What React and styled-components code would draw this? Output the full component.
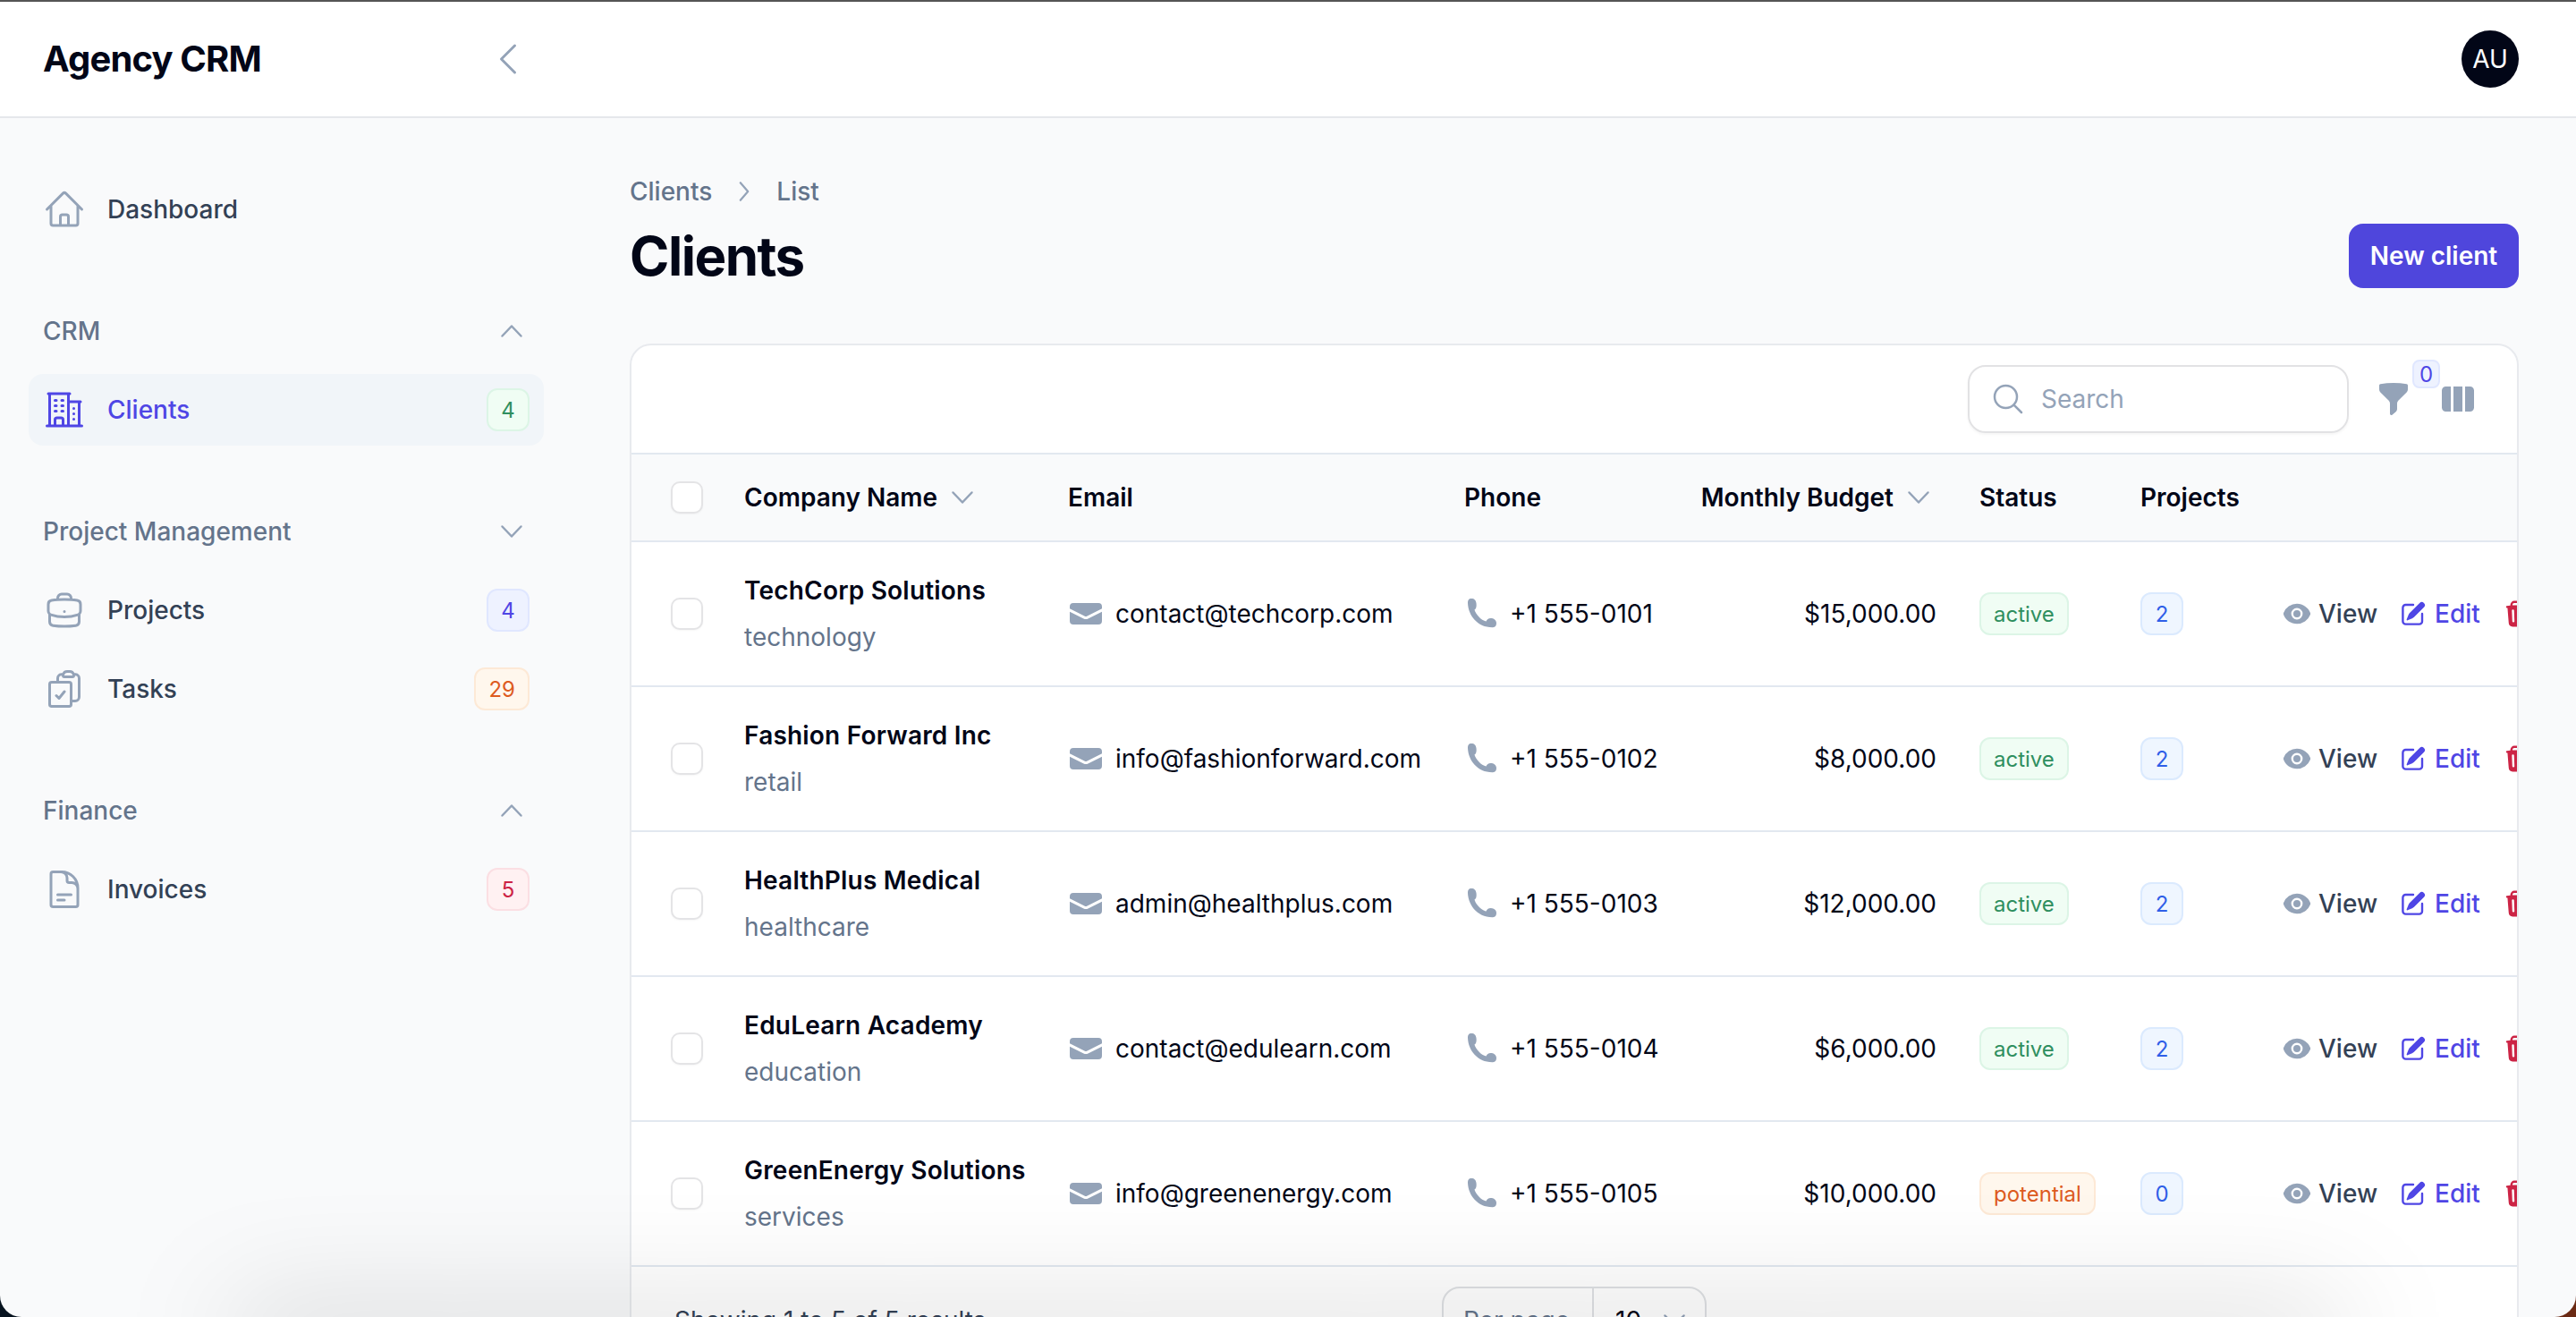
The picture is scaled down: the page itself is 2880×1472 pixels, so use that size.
import React from "react";
import styled, { createGlobalStyle, css } from "styled-components";

const GlobalStyle = createGlobalStyle`
  * { box-sizing: border-box; }
  html, body { margin: 0; padding: 0; }
  body {
    background: linear-gradient(90deg, #07131f 50%, #6b2a14 50%);
    font-family: Inter, "Noto Sans", sans-serif;
    color: #020617;
  }
`;

const tones = {
  gray: { fg: "#334155" },
  primary: { fg: "#4f46e5", bg: "#eef2ff", line: "#e0e7ff" },
  green: { fg: "#2f8f5f", bg: "#f0fdf4", line: "#dcf5e6" },
  orange: { fg: "#dd5b1f", bg: "#fff7ed", line: "#fde9d6" },
  red: { fg: "#cc2445", bg: "#fff1f2", line: "#fbdfe3" },
  blue: { fg: "#2f5fe8", bg: "#eff6ff", line: "#dbeafe" },
};

const Page = styled.div`
  position: relative;
  width: 2880px;
  height: 1472px;
  overflow: hidden;
  display: flex;
  flex-direction: column;
  background: #f9fafb;
  border-bottom-left-radius: 24px;
  border-bottom-right-radius: 24px;
`;

/* shadow of the window underneath, comes up from the bottom edge */
const WindowShade = styled.div`
  position: absolute;
  left: 260px;
  right: 260px;
  top: 1472px;
  height: 40px;
  box-shadow: 0 0 130px rgba(0, 0, 0, 0.26);
  pointer-events: none;
`;

const TopBar = styled.header`
  flex: none;
  height: 132px;
  display: flex;
  align-items: center;
  justify-content: space-between;
  background: #fff;
  border-top: 2px solid #555;
  border-bottom: 2px solid #e5e7eb;
  padding-right: 64px;
`;

const BrandArea = styled.div`
  width: 640px;
  display: flex;
  align-items: center;
  justify-content: space-between;
  padding: 0 48px;
`;

const Brand = styled.div`
  font-size: 40px;
  line-height: 56px;
  font-weight: 700;
  letter-spacing: -0.85px;
  color: #020617;
`;

const Avatar = styled.div`
  width: 64px;
  height: 64px;
  border-radius: 50%;
  background: #020617;
  color: #fff;
  font-size: 28px;
  font-weight: 400;
  display: flex;
  align-items: center;
  justify-content: center;
`;

const Shell = styled.div`
  flex: 1;
  min-height: 0;
  display: flex;
`;

const Sidebar = styled.nav`
  flex: none;
  width: 640px;
  padding: 62px 32px 0;
  display: flex;
  flex-direction: column;
  gap: 56px;
`;

const NavGroup = styled.div`
  display: flex;
  flex-direction: column;
  gap: 8px;
`;

const NavLabel = styled.div`
  height: 80px;
  padding: 0 16px;
  display: flex;
  align-items: center;
  justify-content: space-between;
  font-size: 28px;
  font-weight: 500;
  color: #64748b;
`;

const NavItem = styled.a`
  height: 80px;
  padding: 0 16px;
  display: flex;
  align-items: center;
  gap: 24px;
  border-radius: 16px;
  font-size: 28px;
  font-weight: 500;
  color: ${(p) => (p.$active ? "#4f46e5" : "#334155")};
  background: ${(p) => (p.$active ? "#f1f5f9" : "transparent")};
  span:first-of-type { flex: 1; }
`;

const Pill = styled.span`
  display: inline-flex;
  align-items: center;
  justify-content: center;
  flex: none;
  min-width: 48px;
  height: 48px;
  padding: 0 14px;
  border-radius: 12px;
  font-size: 24px;
  font-weight: 400;
  color: ${(p) => tones[p.$tone].fg};
  background: ${(p) => tones[p.$tone].bg};
  border: 2px solid ${(p) => tones[p.$tone].line};
`;

const Main = styled.main`
  flex: 1;
  min-width: 0;
  padding: 62px 64px 0;
`;

const Crumbs = styled.div`
  display: flex;
  align-items: center;
  height: 40px;
  gap: 18px;
  font-size: 28px;
  font-weight: 500;
  color: #64748b;
`;

const TitleRow = styled.div`
  margin-top: 16px;
  display: flex;
  align-items: center;
  justify-content: space-between;
`;

const Title = styled.h1`
  margin: 0;
  font-size: 60px;
  line-height: 72px;
  font-weight: 700;
  letter-spacing: -1.5px;
  color: #020617;
`;

const NewButton = styled.button`
  height: 72px;
  width: 190px;
  border: 0;
  border-radius: 16px;
  background: #4f46dc;
  color: #fff;
  font-family: inherit;
  font-size: 28px;
  font-weight: 600;
`;

const Card = styled.section`
  margin-top: 62px;
  background: #fff;
  border: 2px solid #e8eaee;
  border-radius: 24px;
  overflow: hidden;
`;

const Toolbar = styled.div`
  height: 120px;
  padding-right: 46px;
  display: flex;
  align-items: center;
  justify-content: flex-end;
  gap: 30px;
`;

const SearchBox = styled.label`
  width: 426px;
  height: 76px;
  padding: 0 23px;
  display: flex;
  align-items: center;
  gap: 17px;
  border: 2px solid #e2e2e4;
  border-radius: 20px;
  box-shadow: 0 2px 3px rgba(0, 0, 0, 0.04);
`;

const SearchInput = styled.input`
  flex: 1;
  min-width: 0;
  border: 0;
  outline: 0;
  padding: 0;
  background: transparent;
  font-family: inherit;
  font-size: 28px;
  color: #020617;
  &::placeholder { color: #94a3b8; }
`;

const ToolIcons = styled.div`
  display: flex;
  gap: 32px;
`;

const FilterWrap = styled.div`
  position: relative;
  width: 40px;
  height: 40px;
`;

const CountBadge = styled.span`
  position: absolute;
  top: -24px;
  left: 41px;
  width: 31px;
  height: 32px;
  display: flex;
  align-items: center;
  justify-content: center;
  border-radius: 8px;
  border: 2px solid #e0e7ff;
  background: #eef2ff;
  color: #4f46e5;
  font-size: 24px;
  font-weight: 400;
`;

const columns = css`
  display: grid;
  grid-template-columns: 126px 362px 443px 243px 285px 228px 159px 1fr;
  align-items: center;
`;

const HeadRow = styled.div`
  ${columns}
  height: 100px;
  background: #f9fafb;
  border-top: 2px solid #e2e8f0;
  border-bottom: 2px solid #e2e8f0;
  font-size: 28px;
  font-weight: 600;
  color: #020617;
`;

const Row = styled.div`
  ${columns}
  height: 162px;
  border-bottom: 2px solid #e2e8f0;
  font-size: 28px;
  color: #020617;
`;

const CheckCell = styled.div`
  padding-left: 44px;
`;

const Check = styled.span`
  display: block;
  width: 36px;
  height: 36px;
  border-radius: 10px;
  border: 2px solid #e4e4e6;
  background: #fff;
  box-shadow: 0 1px 2px rgba(0, 0, 0, 0.04);
`;

const SortLabel = styled.div`
  display: flex;
  align-items: center;
  gap: 8px;
  justify-content: ${(p) => (p.$end ? "flex-end" : "flex-start")};
`;

const Company = styled.div`
  display: flex;
  flex-direction: column;
  gap: 12px;
  line-height: 40px;
`;

const CompanyName = styled.div`
  font-weight: 600;
  letter-spacing: 0.2px;
`;

const CompanyType = styled.div`
  color: #64748b;
`;

const Contact = styled.div`
  display: flex;
  align-items: center;
  gap: ${(p) => p.$gap}px;
`;

const Budget = styled.div`
  text-align: right;
`;

const StatusCell = styled.div`
  padding-left: 48px;
`;

const Actions = styled.div`
  display: flex;
  align-items: center;
  gap: 24px;
`;

const Action = styled.a`
  display: flex;
  align-items: center;
  flex: none;
  gap: 8px;
  font-weight: 500;
  color: ${(p) => tones[p.$tone].fg};
`;

const Footer = styled.div`
  height: 200px;
  padding: 22px 48px;
  display: grid;
  grid-template-columns: 1fr auto 1fr;
  align-items: start;
  font-size: 28px;
`;

const ShowText = styled.div`
  line-height: 76px;
  color: #334155;
`;

const PerPage = styled.div`
  width: 296px;
  height: 76px;
  display: flex;
  align-items: center;
  background: #fff;
  border: 2px solid #dfe1e4;
  border-radius: 20px;
`;

const PerLabel = styled.div`
  width: 168px;
  height: 100%;
  padding-left: 22px;
  display: flex;
  align-items: center;
  color: #64748b;
  border-right: 2px solid #dfe1e4;
`;

const PerValue = styled.div`
  flex: 1;
  padding: 0 14px 0 24px;
  display: flex;
  align-items: center;
  justify-content: space-between;
`;

const Glyph = styled.svg`
  flex: none;
  display: block;
  width: ${(p) => p.$size || 48}px;
  height: ${(p) => p.$size || 48}px;
  color: ${(p) => p.$color || "#94a3b8"};
`;

function Outline({ d, size, color, width = 1.5 }) {
  return (
    <Glyph $size={size} $color={color} viewBox="0 0 24 24" fill="none" stroke="currentColor" strokeWidth={width} strokeLinecap="round" strokeLinejoin="round">
      <path d={d} />
    </Glyph>
  );
}

function Solid({ paths, size = 40, color }) {
  return (
    <Glyph $size={size} $color={color} viewBox="0 0 20 20" fill="currentColor">
      {paths.map((d) => (
        <path key={d} d={d} fillRule="evenodd" clipRule="evenodd" />
      ))}
    </Glyph>
  );
}

const icons = {
  home: "M2.25 12l8.954-8.955c.44-.439 1.152-.439 1.591 0L21.75 12M4.5 9.75v10.125c0 .621.504 1.125 1.125 1.125H9.75v-4.875c0-.621.504-1.125 1.125-1.125h2.25c.621 0 1.125.504 1.125 1.125V21h4.125c.621 0 1.125-.504 1.125-1.125V9.75M8.25 21h8.25",
  building: "M2.25 21h19.5m-18-18v18m10.5-18v18m6-13.5V21M6.75 6.75h.75m-.75 3h.75m-.75 3h.75m3-6h.75m-.75 3h.75m-.75 3h.75M6.75 21v-3.375c0-.621.504-1.125 1.125-1.125h2.25c.621 0 1.125.504 1.125 1.125V21M3 3h12m-.75 4.5H21m-3.75 3.75h.008v.008h-.008v-.008zm0 3h.008v.008h-.008v-.008zm0 3h.008v.008h-.008v-.008z",
  briefcase: "M20.25 14.15v4.25c0 1.094-.787 2.036-1.872 2.18-2.087.277-4.216.42-6.378.42s-4.291-.143-6.378-.42c-1.085-.144-1.872-1.086-1.872-2.18v-4.25m16.5 0a2.18 2.18 0 00.75-1.661V8.706c0-1.081-.768-2.015-1.837-2.175a48.114 48.114 0 00-3.413-.387m4.5 8.006c-.194.165-.42.295-.673.38A23.978 23.978 0 0112 15.75c-2.648 0-5.195-.429-7.577-1.22a2.016 2.016 0 01-.673-.38m0 0A2.18 2.18 0 013 12.489V8.706c0-1.081.768-2.015 1.837-2.175a48.111 48.111 0 013.413-.387m7.5 0V5.25A2.25 2.25 0 0013.5 3h-3a2.25 2.25 0 00-2.25 2.25v.894m7.5 0a48.667 48.667 0 00-7.5 0M12 12.75h.008v.008H12v-.008z",
  clipboard: "M11.35 3.836c-.065.21-.1.433-.1.664 0 .414.336.75.75.75h4.5a.75.75 0 00.75-.75 2.25 2.25 0 00-.1-.664m-5.8 0A2.251 2.251 0 0113.5 2.25H15c1.012 0 1.867.668 2.15 1.586m-5.8 0c-.376.023-.75.05-1.124.08C9.095 4.01 8.25 4.973 8.25 6.108V8.25m8.9-4.414c.376.023.75.05 1.124.08 1.131.094 1.976 1.057 1.976 2.192V16.5A2.25 2.25 0 0118 18.75h-2.25m-7.5-10.5H4.875c-.621 0-1.125.504-1.125 1.125v11.25c0 .621.504 1.125 1.125 1.125h9.75c.621 0 1.125-.504 1.125-1.125V18.75m-7.5-10.5h6.375c.621 0 1.125.504 1.125 1.125v9.375m-8.25-3l1.5 1.5 3-3.75",
  document: "M19.5 14.25v-2.625a3.375 3.375 0 00-3.375-3.375h-1.5A1.125 1.125 0 0113.5 7.125v-1.5a3.375 3.375 0 00-3.375-3.375H8.25m0 12.75h7.5m-7.5 3H12M10.5 2.25H5.625c-.621 0-1.125.504-1.125 1.125v17.25c0 .621.504 1.125 1.125 1.125h12.75c.621 0 1.125-.504 1.125-1.125V11.25a9 9 0 00-9-9z",
  search: "M21 21l-5.197-5.197m0 0A7.5 7.5 0 105.196 5.196a7.5 7.5 0 0010.607 10.607z",
  back: "M15.75 19.5L8.25 12l7.5-7.5",
  up: "M5.7 15.3L12 8.7l6.3 6.6",
  down: "M5.7 8.7L12 15.3l6.3-6.6",
  crumb: "M9.2 5.5L14.8 12l-5.6 6.5",
};

const solid = {
  envelope: [
    "M3 4a2 2 0 00-2 2v1.161l8.441 4.221a1.25 1.25 0 001.118 0L19 7.162V6a2 2 0 00-2-2H3z",
    "M19 8.839l-7.77 3.885a2.75 2.75 0 01-2.46 0L1 8.839V14a2 2 0 002 2h14a2 2 0 002-2V8.839z",
  ],
  eye: [
    "M10 12.5a2.5 2.5 0 100-5 2.5 2.5 0 000 5z",
    "M.664 10.59a1.651 1.651 0 010-1.186A10.004 10.004 0 0110 3c4.257 0 7.893 2.66 9.336 6.41.147.381.146.804 0 1.186A10.004 10.004 0 0110 17c-4.257 0-7.893-2.66-9.336-6.41zM14 10a4 4 0 11-8 0 4 4 0 018 0z",
  ],
  edit: [
    "M5.433 13.917l1.262-3.155A4 4 0 017.58 9.42l6.92-6.918a2.121 2.121 0 013 3l-6.92 6.918c-.383.383-.84.685-1.343.886l-3.154 1.262a.5.5 0 01-.65-.65z",
    "M3.5 5.75c0-.69.56-1.25 1.25-1.25H10A.75.75 0 0010 3H4.75A2.75 2.75 0 002 5.75v9.5A2.75 2.75 0 004.75 18h9.5A2.75 2.75 0 0017 15.25V10a.75.75 0 00-1.5 0v5.25c0 .69-.56 1.25-1.25 1.25h-9.5c-.69 0-1.25-.56-1.25-1.25v-9.5z",
  ],
  trash: [
    "M8.75 1A2.75 2.75 0 006 3.75v.443c-.795.077-1.584.176-2.365.298a.75.75 0 10.23 1.482l.149-.022.841 10.518A2.75 2.75 0 007.596 19h4.807a2.75 2.75 0 002.742-2.53l.841-10.52.149.023a.75.75 0 00.23-1.482A41.03 41.03 0 0014 4.193V3.75A2.75 2.75 0 0011.25 1h-2.5zM10 4c.84 0 1.673.025 2.5.075V3.75c0-.69-.56-1.25-1.25-1.25h-2.5c-.69 0-1.25.56-1.25 1.25v.325C8.327 4.025 9.16 4 10 4zM8.58 7.72a.75.75 0 00-1.5.06l.3 7.5a.75.75 0 101.5-.06l-.3-7.5zm4.34.06a.75.75 0 10-1.5-.06l-.3 7.5a.75.75 0 101.5.06l.3-7.5z",
  ],
  funnel: [
    "M2.628 1.601C5.028 1.206 7.49 1 10 1s4.973.206 7.372.601a.75.75 0 01.628.74v2.288a2.25 2.25 0 01-.659 1.59l-4.682 4.683a2.25 2.25 0 00-.659 1.59v3.037c0 .684-.31 1.33-.844 1.757l-1.937 1.55A.75.75 0 018 18.25v-5.757a2.25 2.25 0 00-.659-1.591L2.659 6.22A2.25 2.25 0 012 4.629V2.34a.75.75 0 01.628-.74z",
  ],
  columns: [
    "M14 17h2.75A2.25 2.25 0 0019 14.75v-9.5A2.25 2.25 0 0016.75 3H14v14zM12.5 3h-5v14h5V3zM3.25 3H6v14H3.25A2.25 2.25 0 011 14.75v-9.5A2.25 2.25 0 013.25 3z",
  ],
};

// the handset in the phone column has a thin waist, heroicons has none like it
function PhoneIcon() {
  return (
    <Glyph $size={40} viewBox="0 0 40 40" fill="currentColor">
      <path d="M8 3C5 3 4 5 4 8 4.500 22 15 35.500 32 35.200 35 35 36 33 36 30.500 36 27 33 25 29.500 25 27 25 25.500 26.500 24.500 28.500 19 27.500 12.500 20 11.500 15.500 13.500 14.500 14 11.500 13.500 8 13 5 11.500 3 8 3z" />
    </Glyph>
  );
}

const clients = [
  { name: "TechCorp Solutions", type: "technology", email: "contact@techcorp.com", phone: "+1 555-0101", budget: "$15,000.00", status: "active", projects: 2 },
  { name: "Fashion Forward Inc", type: "retail", email: "info@fashionforward.com", phone: "+1 555-0102", budget: "$8,000.00", status: "active", projects: 2 },
  { name: "HealthPlus Medical", type: "healthcare", email: "admin@healthplus.com", phone: "+1 555-0103", budget: "$12,000.00", status: "active", projects: 2 },
  { name: "EduLearn Academy", type: "education", email: "contact@edulearn.com", phone: "+1 555-0104", budget: "$6,000.00", status: "active", projects: 2 },
  { name: "GreenEnergy Solutions", type: "services", email: "info@greenenergy.com", phone: "+1 555-0105", budget: "$10,000.00", status: "potential", projects: 0 },
];

export default function App() {
  return (
    <>
      <GlobalStyle />
      <Page>
        <TopBar>
          <BrandArea>
            <Brand>Agency CRM</Brand>
            <Outline d={icons.back} />
          </BrandArea>
          <Avatar>AU</Avatar>
        </TopBar>

        <Shell>
          <Sidebar>
            <NavGroup>
              <NavItem>
                <Outline d={icons.home} />
                <span>Dashboard</span>
              </NavItem>
            </NavGroup>
            <NavGroup>
              <NavLabel>
                CRM
                <Outline d={icons.up} size={40} />
              </NavLabel>
              <NavItem $active>
                <Outline d={icons.building} color="#4f46e5" />
                <span>Clients</span>
                <Pill $tone="green">4</Pill>
              </NavItem>
            </NavGroup>
            <NavGroup>
              <NavLabel>
                Project Management
                <Outline d={icons.down} size={40} />
              </NavLabel>
              <NavItem>
                <Outline d={icons.briefcase} />
                <span>Projects</span>
                <Pill $tone="primary">4</Pill>
              </NavItem>
              <NavItem>
                <Outline d={icons.clipboard} />
                <span>Tasks</span>
                <Pill $tone="orange">29</Pill>
              </NavItem>
            </NavGroup>
            <NavGroup>
              <NavLabel>
                Finance
                <Outline d={icons.up} size={40} />
              </NavLabel>
              <NavItem>
                <Outline d={icons.document} />
                <span>Invoices</span>
                <Pill $tone="red">5</Pill>
              </NavItem>
            </NavGroup>
          </Sidebar>

          <Main>
            <Crumbs>
              <span>Clients</span>
              <Outline d={icons.crumb} size={36} />
              <span>List</span>
            </Crumbs>
            <TitleRow>
              <Title>Clients</Title>
              <NewButton>New client</NewButton>
            </TitleRow>

            <Card>
              <Toolbar>
                <SearchBox>
                  <Outline d={icons.search} size={40} />
                  <SearchInput placeholder="Search" />
                </SearchBox>
                <ToolIcons>
                  <FilterWrap>
                    <Solid paths={solid.funnel} />
                    <CountBadge>0</CountBadge>
                  </FilterWrap>
                  <Solid paths={solid.columns} />
                </ToolIcons>
              </Toolbar>

              <HeadRow>
                <CheckCell><Check /></CheckCell>
                <SortLabel>
                  Company Name
                  <Outline d={icons.down} size={40} />
                </SortLabel>
                <div>Email</div>
                <div>Phone</div>
                <SortLabel $end>
                  Monthly Budget
                  <Outline d={icons.down} size={40} />
                </SortLabel>
                <StatusCell>Status</StatusCell>
                <div>Projects</div>
                <div />
              </HeadRow>

              {clients.map((c) => (
                <Row key={c.name}>
                  <CheckCell><Check /></CheckCell>
                  <Company>
                    <CompanyName>{c.name}</CompanyName>
                    <CompanyType>{c.type}</CompanyType>
                  </Company>
                  <Contact $gap={13}>
                    <Solid paths={solid.envelope} />
                    {c.email}
                  </Contact>
                  <Contact $gap={11}>
                    <PhoneIcon />
                    {c.phone}
                  </Contact>
                  <Budget>{c.budget}</Budget>
                  <StatusCell>
                    <Pill $tone={c.status === "active" ? "green" : "orange"}>{c.status}</Pill>
                  </StatusCell>
                  <div>
                    <Pill $tone="blue">{c.projects}</Pill>
                  </div>
                  <Actions>
                    <Action $tone="gray">
                      <Solid paths={solid.eye} size={32} />
                      View
                    </Action>
                    <Action $tone="primary">
                      <Solid paths={solid.edit} size={32} color="#4f46e5" />
                      Edit
                    </Action>
                    <Action $tone="red">
                      <Solid paths={solid.trash} size={32} color="#cc2445" />
                    </Action>
                  </Actions>
                </Row>
              ))}

              <Footer>
                <ShowText>Showing 1 to 5 of 5 results</ShowText>
                <PerPage>
                  <PerLabel>Per page</PerLabel>
                  <PerValue>
                    10
                    <Outline d={icons.down} size={40} />
                  </PerValue>
                </PerPage>
              </Footer>
            </Card>
          </Main>
        </Shell>
        <WindowShade />
      </Page>
    </>
  );
}
